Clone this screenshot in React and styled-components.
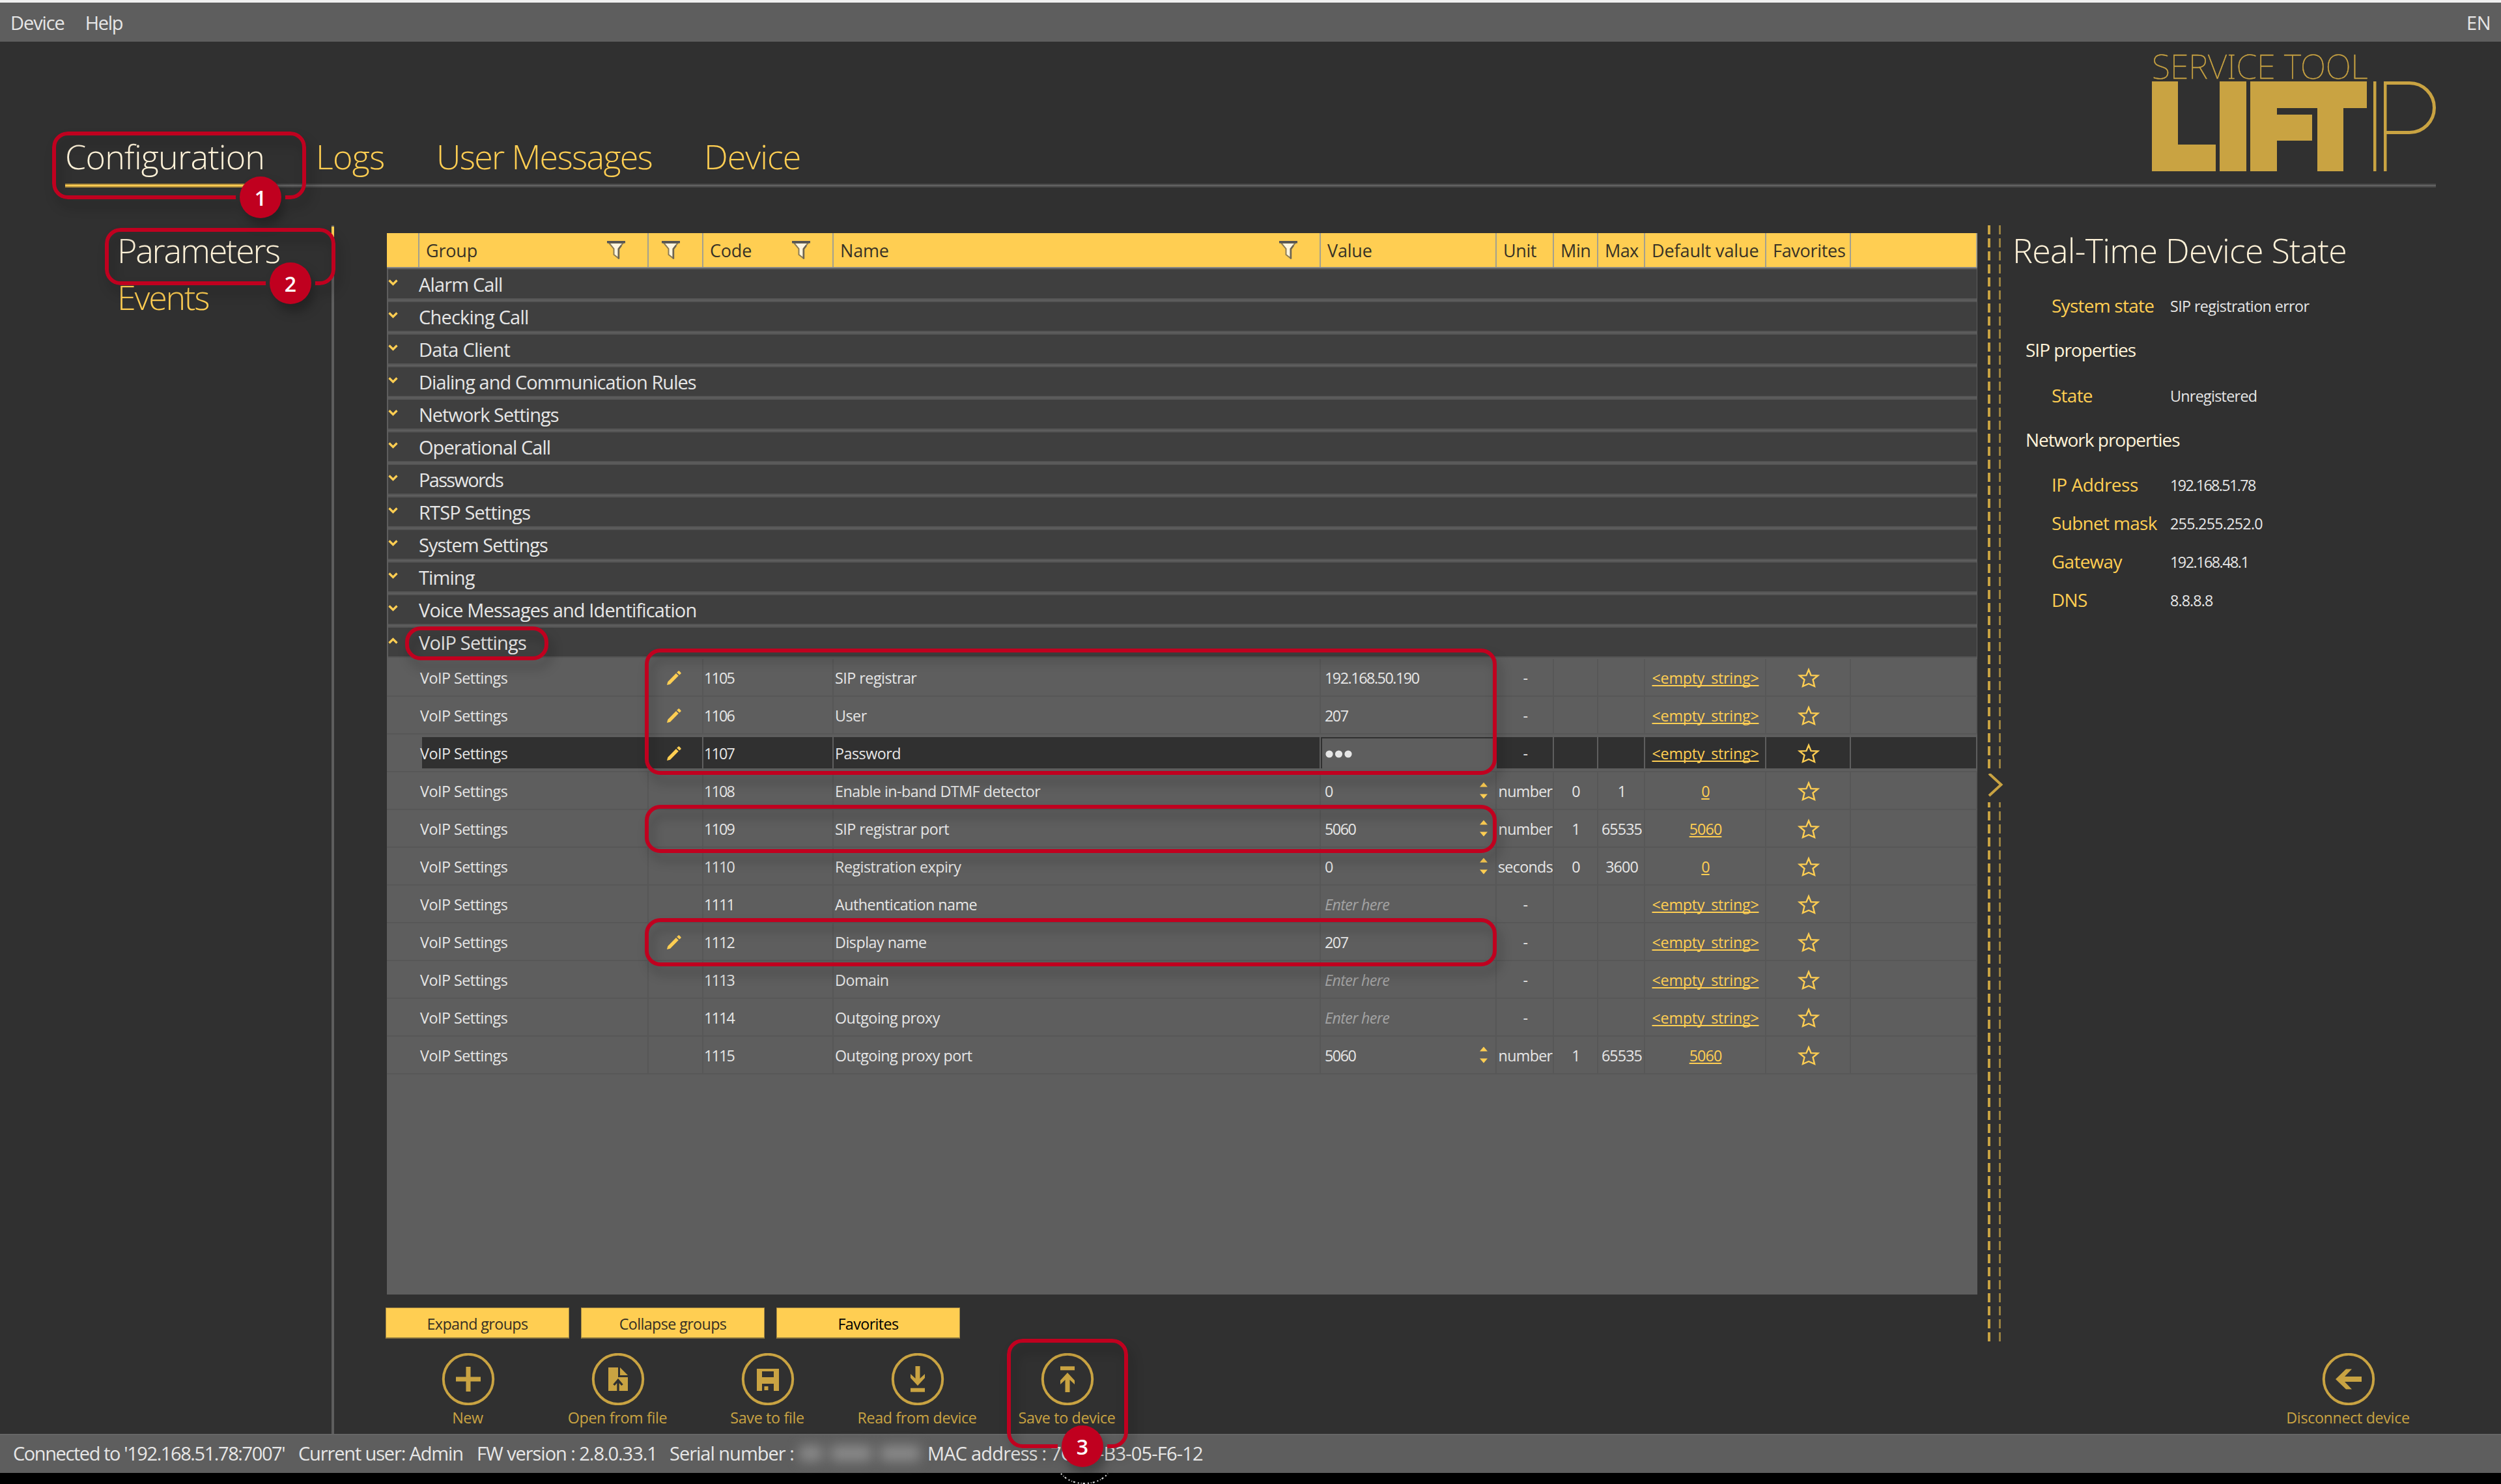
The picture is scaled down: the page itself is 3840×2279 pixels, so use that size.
import styled, { createGlobalStyle, css } from 'styled-components'

const GlobalStyle = createGlobalStyle`
    * { box-sizing: border-box; }
    body {
        margin: 0;
        background-color: #303030;
        font-family: "Open Sans", "Noto Sans", sans-serif;
        font-size: 29px;
        color: #e6e6e6;
    }
`;

const yellow = "#ffce52";
const gold = "#c9a342";
const cream = "#fff3d9";
const red = "#c0001f";

const Window = styled.div`
    position: relative;
    display: flex;
    flex-direction: column;
    width: 3840px;
    height: 2279px;
    overflow: hidden;
    white-space: nowrap;
    background-color: #303030;
    border-top: 4px solid #f0f0f0;
`;

/* one run of text, tightened by ls pixels a letter */
const Text = styled.span`
    letter-spacing: ${(props)=>props.$ls || 0}px;
`;

const MenuBar = styled.div`
    display: flex;
    align-items: center;
    gap: 32px;
    flex: none;
    height: 60px;
    padding: 0 16px;
    background-color: #5e5e5e;
`;

const Language = styled(Text)`
    margin-left: auto;
`;

const Header = styled.div`
    display: flex;
    align-items: flex-end;
    justify-content: space-between;
    flex: none;
    height: 218px;
    margin: 0 100px;
`;

const Tabs = styled.div`
    display: flex;
`;

const Tab = styled.div`
    height: 78px;
    line-height: 72px;
    font-size: 52px;
    font-weight: 300;
    width: ${(props)=>props.$width}px;
    letter-spacing: ${(props)=>props.$ls}px;
    color: ${(props)=>props.$active ? cream : yellow};
`;

const HeaderLine = styled.div`
    flex: none;
    height: 6px;
    margin: 0 100px;
    background: linear-gradient(#484848 2px, #616161 2px, #616161 4px, #484848 4px);
`;

const ActiveLine = styled.div`
    width: 306px;
    height: 6px;
    background: linear-gradient(#b18f3d 2px, ${yellow} 2px, ${yellow} 4px, #b18f3d 4px);
`;

const Logo = styled.div`
    display: flex;
    flex-direction: column;
    width: 436px;
    margin-bottom: 19px;
    color: ${gold};
`;

const LogoTitle = styled.div`
    height: 50px;
    line-height: 52px;
    font-family: "Noto Sans", sans-serif;
    font-size: 51.5px;
    font-weight: 100;
    -webkit-text-stroke: 0.4px ${gold};
`;

const Main = styled.div`
    display: flex;
    flex: 1;
    padding-top: 58px;
`;

const Sidebar = styled.div`
    display: flex;
    width: 513px;
    padding: 2px 0 0 180px;
    border-right: 4px solid #5e5e5e;
    flex-direction: column;
`;

const SidebarItem = styled.div`
    height: 72px;
    line-height: 72px;
    font-size: 52px;
    font-weight: 300;
    letter-spacing: -2.2px;
    color: ${(props)=>props.$active ? cream : yellow};
    ${(props)=>props.$active && css`
        border-right: 4px solid ${yellow};
        margin-right: -4px;
    `}
`;

const Content = styled.div`
    display: flex;
    flex-direction: column;
    flex: 1;
`;

const Upper = styled.div`
    display: flex;
    height: 1714px;
`;

const TableSide = styled.div`
    display: flex;
    flex-direction: column;
    width: 2444px;
    margin-left: 79px;
    padding-top: 12px;
`;

const Table = styled.div`
    width: 2442px;
    height: 1630px;
    margin-left: 2px;
    background-color: #5e5e5e;
`;

const columns = css`
    display: grid;
    grid-template-columns: 50px 352px 84px 200px 748px 270px 88px 68px 72px 186px 130px 194px;
`;

const TableHead = styled.div`
    ${columns}
    height: 54px;
    background-color: ${yellow};
    border-bottom: 2px solid #858585;
    color: #383226;
    font-size: 27px;
`;

const HeadCell = styled.div`
    display: flex;
    align-items: center;
    justify-content: space-between;
    padding: 0 ${(props)=>props.$right || 0}px 0 10px;
    border-right: 2px solid #a3a08f;
`;

const GroupRow = styled.div`
    display: flex;
    align-items: center;
    height: 44px;
    margin: 0 1px 6px 2px;
    background-color: #3f3f3f;
    box-shadow: 0 -2px #545454, 0 2px #545454;
    svg { margin: -4px 32px 0 0; }
`;

const Groups = styled.div`
    padding-top: 2px;
    background-color: #5e5e5e;
    height: 600px;
`;

const Row = styled.div`
    ${columns}
    height: 58px;
    border-bottom: 2px solid #575757;
    font-size: 23.3px;
`;

const Cell = styled.div`
    display: flex;
    align-items: center;
    justify-content: ${(props)=>props.$center ? "center" : "flex-start"};
    padding: 2px 0 0 ${(props)=>props.$pad || 0}px;
    letter-spacing: ${(props)=>props.$ls || 0}px;
    border-right: ${(props)=>props.$open ? "none" : "2px solid #575757"};
    ${(props)=>props.$selected && css`
        margin: 4px 0 4px ${props.$start ? 4 : 0}px;
        padding-left: ${props.$start ? 0 : props.$pad || 0}px;
        background-color: #303030;
        border-right-color: #5e5e5e;
    `}
    ${(props)=>props.$editing && css`
        background-color: #5e5e5e;
        border-top: 2px solid #303030;
        border-left: 2px solid #303030;
    `}
`;

const GroupName = styled.span`
    margin-left: ${(props)=>props.$selected ? -3 : 0}px;
`;

const Placeholder = styled.span`
    font-style: italic;
    letter-spacing: -0.65px;
    color: #a3a3a3;
`;

const Spinner = styled.svg`
    margin: -2px 11px 0 auto;
`;

const DefaultLink = styled.span`
    padding-left: 1px;
    color: ${yellow};
    letter-spacing: ${(props)=>props.$ls}px;
    text-decoration: underline;
    text-decoration-thickness: 2px;
    text-underline-offset: 2px;
    text-decoration-skip-ink: none;
`;

const GroupButtons = styled.div`
    display: flex;
    gap: 18px;
    margin-top: 20px;
`;

const GroupButton = styled.div`
    width: 282px;
    height: 48px;
    line-height: 48px;
    text-align: center;
    font-size: 23.3px;
    letter-spacing: -0.6px;
    color: ${(props)=>props.$dark ? "#000" : "#363024"};
    background-color: ${yellow};
    border: 1px solid #a88a42;
    border-bottom: 2px solid #7b6a3d;
`;

const Splitter = styled.div`
    display: flex;
    flex-direction: column;
    justify-content: space-between;
    width: 24px;
    margin-left: 16px;
`;

const Dashes = styled.div`
    width: 20px;
    height: ${(props)=>props.$height}px;
    background: linear-gradient(90deg, ${gold} 4px, transparent 4px, transparent 17px, #98803f 17px);
    mask-image: repeating-linear-gradient(#000 0 14px, transparent 14px 20px);
    mask-position: 0 ${(props)=>props.$shift || 0}px;
`;

const StatePanel = styled.div`
    margin-left: 15px;
`;

const PanelTitle = styled.div`
    height: 88px;
    line-height: 76px;
    font-size: 52px;
    font-weight: 300;
    letter-spacing: -0.75px;
    color: ${cream};
    margin-left: -1px;
`;

const PanelHeading = styled.div`
    height: ${(props)=>props.$height}px;
    line-height: ${(props)=>props.$height}px;
    margin: 0 0 ${(props)=>props.$after || 0}px 19px;
    font-size: 28px;
    letter-spacing: -1px;
    color: ${cream};
`;

const PanelRow = styled.div`
    display: grid;
    grid-template-columns: 182px auto;
    align-items: center;
    height: ${(props)=>props.$height || 59}px;
    margin-left: 59px;
`;

const PanelLabel = styled.span`
    font-size: 28px;
    letter-spacing: ${(props)=>props.$ls || -0.75}px;
    color: ${yellow};
`;

const PanelValue = styled.span`
    padding-top: 2px;
    font-size: 23.3px;
    letter-spacing: ${(props)=>props.$ls}px;
`;

const Toolbar = styled.div`
    display: flex;
    height: 142px;
    padding: 18px 119px 0 91px;
`;

const Tool = styled.div`
    display: flex;
    flex-direction: column;
    align-items: center;
    width: 230px;
    font-size: 23.3px;
    line-height: 38px;
    letter-spacing: ${(props)=>props.$ls || -0.35}px;
    color: ${gold};
    ${(props)=>props.$last && "margin-left: auto;"}
    span { margin-right: 2px; }
`;

const StatusBar = styled.div`
    display: flex;
    align-items: center;
    flex: none;
    height: 60px;
    padding: 0 0 3px 20px;
    margin-bottom: 17px;
    background-color: #5e5e5e;
    border-top: 2px solid #666;
    box-shadow: 0 17px #000;
`;

const StatusItem = styled.span`
    width: ${(props)=>props.$width}px;
    letter-spacing: ${(props)=>props.$ls}px;
`;

const HiddenSerial = styled.span`
    display: flex;
    gap: 14px;
    width: 202px;
    padding-left: 6px;
    filter: blur(9px);
`;

const HiddenPart = styled.span`
    width: ${(props)=>props.$width}px;
    height: 24px;
    background-color: #8a8a8a;
`;

/* numbered marks drawn over the window */
const Mark = styled.div`
    position: absolute;
    left: ${(props)=>props.$x}px;
    top: ${(props)=>props.$y - 4}px;
    width: ${(props)=>props.$w}px;
    height: ${(props)=>props.$h}px;
    filter: drop-shadow(6px 12px 8px rgba(0, 0, 0, 0.28));
`;

const Frame = styled.div`
    width: 100%;
    height: 100%;
    border: 6px solid ${red};
    border-radius: 24px;
    ${(props)=>props.$bx && css`
        mask-image: radial-gradient(circle at ${props.$bx}px ${props.$by}px, transparent 37.5px, #000 38.5px);
    `}
`;

const Badge = styled.div`
    position: absolute;
    left: ${(props)=>props.$bx - 32}px;
    top: ${(props)=>props.$by - 32}px;
    width: 64px;
    height: 64px;
    border-radius: 50%;
    background-color: ${red};
    color: white;
    font-size: 32px;
    font-weight: 600;
    line-height: 65px;
    text-align: center;
`;

const Debris = styled.svg`
    position: absolute;
    left: 1626px;
    top: 2256px;
`;

const groups = [
  { name: "Alarm Call", ls: -0.85 },
  { name: "Checking Call", ls: -0.8 },
  { name: "Data Client", ls: -0.75 },
  { name: "Dialing and Communication Rules", ls: -0.95 },
  { name: "Network Settings", ls: -1 },
  { name: "Operational Call", ls: -0.95 },
  { name: "Passwords", ls: -1.7 },
  { name: "RTSP Settings", ls: -0.85 },
  { name: "System Settings", ls: -1 },
  { name: "Timing", ls: -0.9 },
  { name: "Voice Messages and Identification", ls: -0.9 },
  { name: "VoIP Settings", ls: -0.8, open: true },
];

const params = [
  { code: "1105", name: "SIP registrar", value: "192.168.50.190", edited: true },
  { code: "1106", name: "User", value: "207", edited: true },
  { code: "1107", name: "Password", secret: true, edited: true, selected: true },
  { code: "1108", name: "Enable in-band DTMF detector", value: "0", unit: "number", min: "0", max: "1", def: "0" },
  { code: "1109", name: "SIP registrar port", value: "5060", unit: "number", min: "1", max: "65535", def: "5060" },
  { code: "1110", name: "Registration expiry", value: "0", unit: "seconds", min: "0", max: "3600", def: "0" },
  { code: "1111", name: "Authentication name" },
  { code: "1112", name: "Display name", value: "207", edited: true },
  { code: "1113", name: "Domain" },
  { code: "1114", name: "Outgoing proxy" },
  { code: "1115", name: "Outgoing proxy port", value: "5060", unit: "number", min: "1", max: "65535", def: "5060" },
];

const marks = [
  { x: 80, y: 202, w: 390, h: 104, label: "1", bx: 320, by: 101 },
  { x: 161, y: 350, w: 354, h: 88, label: "2", bx: 285, by: 85 },
  { x: 622, y: 962, w: 220, h: 52 },
  { x: 990, y: 996, w: 1308, h: 194 },
  { x: 990, y: 1236, w: 1308, h: 74 },
  { x: 990, y: 1410, w: 1308, h: 74 },
  { x: 1546, y: 2056, w: 186, h: 168, label: "3", bx: 116, by: 165 },
];

const FilterIcon = () => (
  <svg width="28" height="28" viewBox="0 0 28 28">
    <path d="M3 3L10.500 12V21L17.500 26.500V12L25 3Z" fill="#fff6e0" stroke="#8c7c55" strokeWidth="2" />
    <path d="M18 27.500V12.500L22 7" fill="none" stroke="#6b6454" strokeWidth="2.400" />
    <rect width="28" height="3.500" fill="#555" />
  </svg>
);

const GroupChevron = ({ open }) => (
  <svg width="15" height="10" viewBox="0 0 15 10">
    <path d={open ? "M1.500 8.500L7.500 2.500L13.500 8.500" : "M1.500 1.500L7.500 7.500L13.500 1.500"} fill="none" stroke={yellow} strokeWidth="3.200" />
  </svg>
);

const PencilIcon = () => (
  <svg width="26" height="22" viewBox="0 0 26 22" fill={yellow}>
    <path d="M0 22L1.300 17L14 4L17.800 7.800L5 20.700Z" />
    <path d="M15.200 2.800L17.400 0.600Q18.200 0 19 0.600L21.400 3Q22 3.800 21.400 4.600L19.200 6.600Z" />
  </svg>
);

const StarIcon = () => (
  <svg width="36" height="32" viewBox="-1 0 36 32">
    <path d="M18 3.500L21.600 12.200L32 12.600L24.500 18.800L27 29L18 25L9 29L11.500 18.800L4 12.600L14.400 12.200Z" fill="none" stroke={yellow} strokeWidth="2.400" />
  </svg>
);

const Spin = () => (
  <Spinner width="14" height="26" viewBox="0 0 14 26" fill={yellow}>
    <path d="M7 0.500L13 7.500H1Z" />
    <path d="M7 25.500L13 18.500H1Z" />
  </Spinner>
);

const Dots = () => (
  <svg width="44" height="12" viewBox="0 0 44 12" fill="#e6e6e6">
    <circle cx="6" cy="6" r="5.600" />
    <circle cx="20.500" cy="6" r="5.600" />
    <circle cx="35" cy="6" r="5.600" />
  </svg>
);

const ToolIcon = ({ children }) => (
  <svg width="82" height="80" viewBox="-1 0 82 80" fill={gold}>
    <circle cx="40" cy="40" r="38.200" fill="none" stroke={gold} strokeWidth="4" />
    {children}
  </svg>
);

const LogoMark = () => (
  <svg width="436" height="138" viewBox="0 0 436 138" fill={gold}>
    <rect x="0" y="0" width="40" height="138" />
    <rect x="0" y="97" width="98" height="41" />
    <rect x="104" y="0" width="41" height="138" />
    <rect x="151" y="0" width="41" height="138" />
    <rect x="151" y="0" width="179" height="41" />
    <rect x="151" y="51" width="95" height="40" />
    <rect x="254" y="0" width="40" height="138" />
    <rect x="340" y="0" width="4.500" height="138" />
    <rect x="356" y="0" width="4.500" height="138" />
    <svg x="358" y="0" width="78" height="82">
      <rect x="-80" y="2.500" width="155.500" height="76" rx="38" fill="none" stroke={gold} strokeWidth="5" />
    </svg>
  </svg>
);

const ParamRow = ({ item }) => {
  const sel = item.selected;
  const def = item.def || "<empty_string>";
  return (
    <Row>
      <Cell $open />
      <Cell $pad={1} $ls={-0.5} $selected={sel} $start><GroupName $selected={sel}>VoIP Settings</GroupName></Cell>
      <Cell $center $selected={sel}>{item.edited && <PencilIcon />}</Cell>
      <Cell $pad={1} $ls={-1.8} $selected={sel}>{item.code}</Cell>
      <Cell $pad={2} $ls={-0.5} $selected={sel}>{item.name}</Cell>
      <Cell $pad={sel ? 5 : 6} $ls={-1.45} $selected={sel} $editing={sel}>
        {item.secret ? <Dots /> : item.value || <Placeholder>Enter here</Placeholder>}
        {item.unit && <Spin />}
      </Cell>
      <Cell $center $pad={2} $ls={-0.7} $selected={sel}>{item.unit || "-"}</Cell>
      <Cell $center $pad={1} $ls={-1} $selected={sel}>{item.min}</Cell>
      <Cell $center $pad={2} $ls={-0.9} $selected={sel}>{item.max}</Cell>
      <Cell $center $selected={sel}><DefaultLink $ls={item.def ? -0.9 : -0.25}>{def}</DefaultLink></Cell>
      <Cell $center $selected={sel}><StarIcon /></Cell>
      <Cell $selected={sel} />
    </Row>
  );
};

const App = () => {
  return (
    <Window>
      <GlobalStyle />
      <MenuBar>
        <Text $ls={-1.1}>Device</Text>
        <Text $ls={-1.3}>Help</Text>
        <Language $ls={-0.5}>EN</Language>
      </MenuBar>
      <Header>
        <Tabs>
          <Tab $active $width={385} $ls={-0.8}>Configuration</Tab>
          <Tab $width={185} $ls={-0.7}>Logs</Tab>
          <Tab $width={411} $ls={-1.7}>User Messages</Tab>
          <Tab $width={200} $ls={-1}>Device</Tab>
        </Tabs>
        <Logo>
          <LogoTitle>SERVICE TOOL</LogoTitle>
          <LogoMark />
        </Logo>
      </Header>
      <HeaderLine><ActiveLine /></HeaderLine>
      <Main>
        <Sidebar>
          <SidebarItem $active>Parameters</SidebarItem>
          <SidebarItem>Events</SidebarItem>
        </Sidebar>
        <Content>
          <Upper>
            <TableSide>
              <Table>
                <TableHead>
                  <HeadCell />
                  <HeadCell $right={34}><Text $ls={-0.2}>Group</Text><FilterIcon /></HeadCell>
                  <HeadCell $right={34}><span /><FilterIcon /></HeadCell>
                  <HeadCell $right={34}><Text $ls={-0.2}>Code</Text><FilterIcon /></HeadCell>
                  <HeadCell $right={34}><Text $ls={-0.2}>Name</Text><FilterIcon /></HeadCell>
                  <HeadCell><Text $ls={-0.2}>Value</Text></HeadCell>
                  <HeadCell><Text $ls={-0.4}>Unit</Text></HeadCell>
                  <HeadCell><Text $ls={-0.4}>Min</Text></HeadCell>
                  <HeadCell><Text $ls={-0.6}>Max</Text></HeadCell>
                  <HeadCell><Text $ls={-0.1}>Default value</Text></HeadCell>
                  <HeadCell><Text $ls={-0.3}>Favorites</Text></HeadCell>
                  <HeadCell />
                </TableHead>
                <Groups>
                  {groups.map((g) => (
                    <GroupRow key={g.name}>
                      <GroupChevron open={g.open} />
                      <Text $ls={g.ls}>{g.name}</Text>
                    </GroupRow>
                  ))}
                </Groups>
                {params.map((p) => <ParamRow key={p.code} item={p} />)}
              </Table>
              <GroupButtons>
                <GroupButton>Expand groups</GroupButton>
                <GroupButton>Collapse groups</GroupButton>
                <GroupButton $dark>Favorites</GroupButton>
              </GroupButtons>
            </TableSide>
            <Splitter>
              <Dashes $height={834} />
              <svg width="24" height="36" viewBox="0 0 24 36">
                <path d="M2 0L20.500 17L2 34" fill="none" stroke={gold} strokeWidth="4" />
              </svg>
              <Dashes $height={828} $shift={-6} />
            </Splitter>
            <StatePanel>
              <PanelTitle>Real-Time Device State</PanelTitle>
              <PanelRow $height={70}><PanelLabel>System state</PanelLabel><PanelValue $ls={-0.6}>SIP registration error</PanelValue></PanelRow>
              <PanelHeading $height={66}>SIP properties</PanelHeading>
              <PanelRow $height={74}><PanelLabel>State</PanelLabel><PanelValue $ls={-0.7}>Unregistered</PanelValue></PanelRow>
              <PanelHeading $height={62} $after={8}>Network properties</PanelHeading>
              <PanelRow><PanelLabel $ls={-0.5}>IP Address</PanelLabel><PanelValue $ls={-1.6}>192.168.51.78</PanelValue></PanelRow>
              <PanelRow><PanelLabel $ls={-0.7}>Subnet mask</PanelLabel><PanelValue $ls={-0.75}>255.255.252.0</PanelValue></PanelRow>
              <PanelRow><PanelLabel>Gateway</PanelLabel><PanelValue $ls={-1.5}>192.168.48.1</PanelValue></PanelRow>
              <PanelRow><PanelLabel>DNS</PanelLabel><PanelValue $ls={-0.9}>8.8.8.8</PanelValue></PanelRow>
            </StatePanel>
          </Upper>
          <Toolbar>
            <Tool>
              <ToolIcon><path d="M36.500 21H43.500V36.500H59V43.500H43.500V59H36.500V43.500H21V36.500H36.500Z" /></ToolIcon>
              <span>New</span>
            </Tool>
            <Tool>
              <ToolIcon>
                <path d="M25 22H40V37H55V58H25Z M43 22L55 34H43Z" />
                <path d="M40 58V41.500M33.500 49L40 41.500L46.500 49" fill="none" stroke="#303030" strokeWidth="3.400" />
              </ToolIcon>
              <span>Open from file</span>
            </Tool>
            <Tool>
              <ToolIcon><path fillRule="evenodd" d="M23 24H57V58H49V47H31V58H23Z M31 28V37H49V28Z M34.500 51H40.500V57H34.500Z" /></ToolIcon>
              <span>Save to file</span>
            </Tool>
            <Tool>
              <ToolIcon>
                <path d="M40 50L51 38V32L43.500 39V20H36.500V39L29 32V38Z" />
                <rect x="29" y="53.700" width="22" height="6" />
              </ToolIcon>
              <span>Read from device</span>
            </Tool>
            <Tool>
              <ToolIcon>
                <rect x="29" y="20.300" width="22" height="6" />
                <path d="M40 30L51 42V48L43.500 41V60H36.500V41L29 48V42Z" />
              </ToolIcon>
              <span>Save to device</span>
            </Tool>
            <Tool $last>
              <ToolIcon><path d="M20 40L36 24.500H45L34 36H60V44H34L45 55.500H36Z" /></ToolIcon>
              <span>Disconnect device</span>
            </Tool>
          </Toolbar>
        </Content>
      </Main>
      <StatusBar>
        <StatusItem $width={438} $ls={-1.42}>Connected to '192.168.51.78:7007'</StatusItem>
        <StatusItem $width={274} $ls={-1.15}>Current user: Admin</StatusItem>
        <StatusItem $width={296} $ls={-1.05}>FW version : 2.8.0.33.1</StatusItem>
        <StatusItem $width={194} $ls={-1}>Serial number :</StatusItem>
        <HiddenSerial>
          <HiddenPart $width={34} />
          <HiddenPart $width={62} />
          <HiddenPart $width={60} />
        </HiddenSerial>
        <StatusItem $ls={-0.8}>MAC address : 7C-1E-B3-05-F6-12</StatusItem>
      </StatusBar>
      {marks.map((m) => (
        <Mark key={m.x + "-" + m.y} $x={m.x} $y={m.y} $w={m.w} $h={m.h}>
          <Frame $bx={m.bx} $by={m.by} />
          {m.label && <Badge $bx={m.bx} $by={m.by}>{m.label}</Badge>}
        </Mark>
      ))}
      <Debris width="78" height="24" viewBox="0 0 78 24">
        <path d="M3 3Q16 18 39 18Q62 18 75 3" fill="none" stroke="#ddd" strokeWidth="2" strokeDasharray="2 3 1 2 3 4" />
      </Debris>
    </Window>
  );
};

export default App
